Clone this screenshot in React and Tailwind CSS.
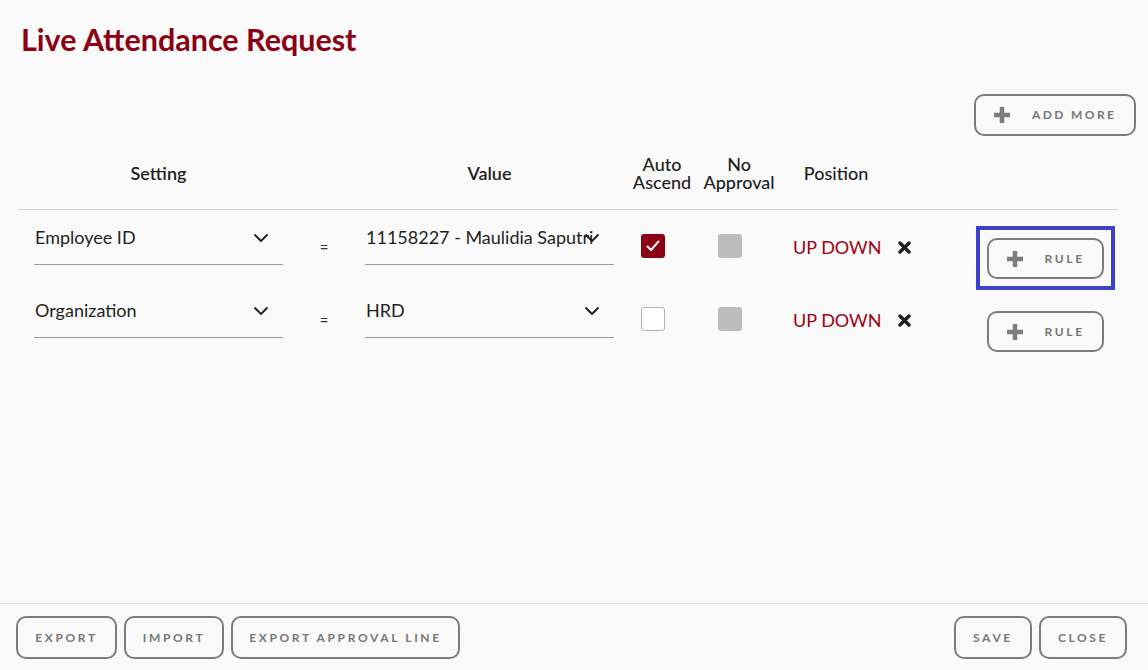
import React from 'react';

const Plus = () => (
  <svg width="18" height="18" viewBox="0 0 18 18" fill="none" stroke="#7d7d7d" strokeWidth="4.5">
    <line x1="9" y1="1" x2="9" y2="17" />
    <line x1="1" y1="9" x2="17" y2="9" />
  </svg>
);

const Chevron = () => (
  <svg width="16" height="10" viewBox="0 0 16 10" fill="none" stroke="#1f1f1f" strokeWidth="1.8" strokeLinecap="round" strokeLinejoin="round">
    <polyline points="2 2 8 8 14 2" />
  </svg>
);

const Cross = () => (
  <svg width="13" height="13" viewBox="0 0 13 13" fill="none" stroke="#1f1f1f" strokeWidth="3.4" strokeLinecap="round">
    <line x1="2" y1="2" x2="11" y2="11" />
    <line x1="11" y1="2" x2="2" y2="11" />
  </svg>
);

const Check = () => (
  <svg width="16" height="16" viewBox="0 0 16 16" fill="none" stroke="#ffffff" strokeWidth="2" strokeLinecap="round" strokeLinejoin="round">
    <polyline points="2.5 8.5 6 12 13.5 3.5" />
  </svg>
);

function Select({ value }) {
  return (
    <div className="relative w-[249px] h-[41px] border-b border-[#9a9a9a] pt-[2px] pl-[1px]">
      <span className="text-[18px] leading-[20px] text-[#1f1f1f] whitespace-nowrap">{value}</span>
      <span className="absolute right-[14px] top-[9px]"><Chevron /></span>
    </div>
  );
}

function ActionBtn({ children, className = '' }) {
  return (
    <button className={`h-[43px] rounded-[10px] border-2 border-[#7d7d7d] bg-transparent text-[12px] font-bold tracking-[0.22em] text-[#777777] uppercase ${className}`}>
      {children}
    </button>
  );
}

function Row({ setting, value, checked, focused }) {
  return (
    <div className="flex items-start h-[55px] pl-[16px]">
      <Select value={setting} />
      <div className="w-[82px] text-center pt-[13px] text-[15px] leading-[20px] text-[#333]">=</div>
      <Select value={value} />
      {checked ? (
        <div className="ml-[27px] mt-[10px] w-[24px] h-[24px] rounded-[3px] bg-[#8c0013] flex items-center justify-center">
          <Check />
        </div>
      ) : (
        <div className="ml-[27px] mt-[10px] w-[24px] h-[24px] rounded-[3px] bg-white border border-[#b5b5b5]" />
      )}
      <div className="ml-[53px] mt-[10px] w-[24px] h-[24px] rounded-[3px] bg-[#bdbdbd]" />
      <div className="ml-[51px] mt-[13px] text-[18px] leading-[20px] text-[#a0000f] whitespace-nowrap">UP DOWN</div>
      <div className="ml-[17px] mt-[17px]"><Cross /></div>
      <div className="relative ml-[76px] mt-[14px]">
        <button className="w-[117px] h-[41px] rounded-[10px] border-2 border-[#7d7d7d] flex items-center pl-[17px]">
          <Plus />
          <span className="ml-[20px] text-[12px] font-bold tracking-[0.22em] text-[#777777]">RULE</span>
        </button>
        {focused && (
          <div className="absolute -top-[12px] -bottom-[11px] -left-[11px] -right-[11px] border-4 border-[#3c42c9] pointer-events-none" />
        )}
      </div>
    </div>
  );
}

export default function App() {
  return (
    <div className="h-screen w-full bg-[#fafafa] flex flex-col font-['Lato','Liberation_Sans',sans-serif]">
      <div className="flex-1 pl-[18px] pr-[12px]">
        <h1 className="pt-[21px] pl-[3px] text-[30.5px] leading-[37px] font-bold text-[#8c0013]">Live Attendance Request</h1>

        <div className="flex justify-end mt-[36px]">
          <button className="w-[162px] h-[42px] rounded-[10px] border-2 border-[#7d7d7d] flex items-center pl-[17px]">
            <Plus />
            <span className="ml-[21px] text-[12px] font-bold tracking-[0.2em] text-[#777777]">ADD MORE</span>
          </button>
        </div>

        <div className="flex items-center h-[56px] mt-[9px] pl-[16px] text-[18px] leading-[18px] font-semibold text-[#222] text-center">
          <div className="w-[249px]">Setting</div>
          <div className="w-[82px]" />
          <div className="w-[249px]">Value</div>
          <div className="w-[10px]" />
          <div className="w-[76px] font-medium">Auto<br />Ascend</div>
          <div className="w-[78px] font-medium">No<br />Approval</div>
          <div className="w-[116px] font-medium">Position</div>
        </div>

        <div className="mt-[8px] border-t border-[#d4d4d4] mr-[18px] pt-[14px] flex flex-col gap-[18px]">
          <Row setting="Employee ID" value="11158227 - Maulidia Saputri" checked focused />
          <Row setting="Organization" value="HRD" />
        </div>
      </div>

      <div className="border-t border-[#e0e0e0] h-[67px] flex items-start justify-between pt-[12px] pl-[16px] pr-[21px]">
        <div className="flex gap-[7px]">
          <ActionBtn className="w-[101px]">Export</ActionBtn>
          <ActionBtn className="w-[100px]">Import</ActionBtn>
          <ActionBtn className="w-[229px]">Export Approval Line</ActionBtn>
        </div>
        <div className="flex gap-[7px]">
          <ActionBtn className="w-[78px]">Save</ActionBtn>
          <ActionBtn className="w-[88px]">Close</ActionBtn>
        </div>
      </div>
    </div>
  );
}
